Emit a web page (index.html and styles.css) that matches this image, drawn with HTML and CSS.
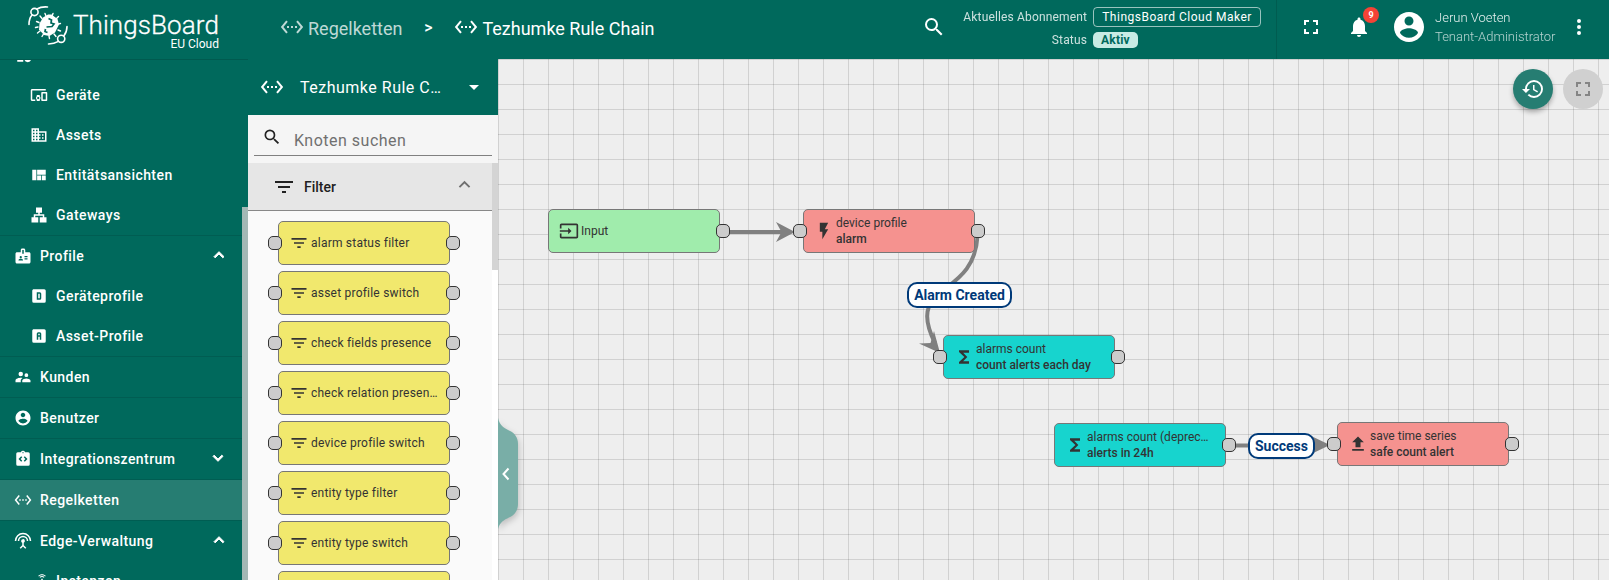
FILE: index.html
```html
<!DOCTYPE html>
<html lang="de">
<head>
<meta charset="utf-8">
<title>ThingsBoard – Tezhumke Rule Chain</title>
<link rel="stylesheet" href="styles.css">
</head>
<body>
<svg class="defs" width="0" height="0">
  <symbol id="rule" viewBox="0 0 24 24"><path d="M7.77 6.76 6.23 5.48.82 12l5.41 6.52 1.54-1.28L3.42 12l4.35-5.24zM7 13h2v-2H7v2zm10-2h-2v2h2v-2zm-6 2h2v-2h-2v2zm6.77-7.52-1.54 1.28L20.58 12l-4.35 5.24 1.54 1.28L23.18 12l-5.41-6.52z"/></symbol>
  <symbol id="search" viewBox="0 0 24 24"><path d="M15.5 14h-.79l-.28-.27A6.471 6.471 0 0 0 16 9.5 6.5 6.5 0 1 0 9.5 16c1.61 0 3.09-.59 4.23-1.57l.27.28v.79l5 4.99L20.49 19l-4.99-5zm-6 0C7.01 14 5 11.99 5 9.5S7.01 5 9.5 5 14 7.01 14 9.5 11.99 14 9.5 14z"/></symbol>
  <symbol id="full" viewBox="0 0 24 24"><path d="M7 14H5v5h5v-2H7v-3zm-2-4h2V7h3V5H5v5zm12 7h-3v2h5v-5h-2v3zM14 5v2h3v3h2V5h-5z"/></symbol>
  <symbol id="bell" viewBox="0 0 24 24"><path d="M12 22c1.1 0 2-.9 2-2h-4a2 2 0 0 0 2 2zm6-6v-5c0-3.07-1.64-5.64-4.5-6.32V4c0-.83-.67-1.5-1.5-1.5s-1.5.67-1.5 1.5v.68C7.63 5.36 6 7.92 6 11v5l-2 2v1h16v-1l-2-2z"/></symbol>
  <symbol id="account" viewBox="0 0 24 24"><path d="M12 2C6.48 2 2 6.48 2 12s4.48 10 10 10 10-4.48 10-10S17.52 2 12 2zm0 3c1.66 0 3 1.34 3 3s-1.34 3-3 3-3-1.34-3-3 1.34-3 3-3zm0 14.2a7.2 7.2 0 0 1-6-3.22c.03-1.99 4-3.08 6-3.08 1.99 0 5.97 1.09 6 3.08a7.2 7.2 0 0 1-6 3.22z"/></symbol>
  <symbol id="more" viewBox="0 0 24 24"><path d="M12 8a2 2 0 1 0 0-4 2 2 0 0 0 0 4zm0 2a2 2 0 1 0 0 4 2 2 0 0 0 0-4zm0 6a2 2 0 1 0 0 4 2 2 0 0 0 0-4z"/></symbol>
  <symbol id="history" viewBox="0 0 24 24"><path d="M13 3a9 9 0 0 0-9 9H1l3.89 3.89.07.14L9 12H6c0-3.87 3.13-7 7-7s7 3.13 7 7-3.13 7-7 7a6.95 6.95 0 0 1-4.94-2.06l-1.42 1.42A8.95 8.95 0 0 0 13 21a9 9 0 0 0 0-18zm-1 5v5l4.28 2.54.72-1.21-3.5-2.08V8H12z"/></symbol>
  <symbol id="up" viewBox="0 0 24 24"><path d="M7.41 15.41 12 10.83l4.59 4.58L18 14l-6-6-6 6z"/></symbol>
  <symbol id="devices" viewBox="0 0 24 24"><path d="M3 6h18V4H3c-1.1 0-2 .9-2 2v12c0 1.1.9 2 2 2h4v-2H3V6zm10 6H9v1.78c-.61.55-1 1.33-1 2.22s.39 1.67 1 2.22V20h4v-1.78c.61-.55 1-1.34 1-2.22s-.39-1.67-1-2.22V12zm-2 5.5c-.83 0-1.5-.67-1.5-1.5s.67-1.5 1.5-1.5 1.5.67 1.5 1.5-.67 1.5-1.5 1.5zM22 8h-6c-.5 0-1 .5-1 1v10c0 .5.5 1 1 1h6c.5 0 1-.5 1-1V9c0-.5-.5-1-1-1zm-1 10h-4v-8h4v8z"/></symbol>
  <symbol id="domain" viewBox="0 0 24 24"><path d="M12 7V3H2v18h20V7H12zM6 19H4v-2h2v2zm0-4H4v-2h2v2zm0-4H4V9h2v2zm0-4H4V5h2v2zm4 12H8v-2h2v2zm0-4H8v-2h2v2zm0-4H8V9h2v2zm0-4H8V5h2v2zm10 12h-8v-2h2v-2h-2v-2h2v-2h-2V9h8v10zm-2-8h-2v2h2v-2zm0 4h-2v2h2v-2z"/></symbol>
  <symbol id="quilt" viewBox="0 0 24 24"><path d="M3 5v14h5.500V5H3zm6.500 7.500V19h5.200v-6.500zM15.700 12.500V19H21v-6.500zM9.500 5v6.500H21V5z"/></symbol>
  <symbol id="lan" viewBox="0 0 24 24"><path d="M8 2h8v7h-3v2h6v4h3v7h-9v-7h4v-2H7v2h4v7H2v-7h3v-4h6V9H8z"/></symbol>
  <symbol id="badge" viewBox="0 0 24 24"><path fill-rule="evenodd" d="M20 7h-5V4c0-1.100-.9-2-2-2h-2c-1.100 0-2 .9-2 2v3H4c-1.100 0-2 .9-2 2v11c0 1.100.9 2 2 2h16c1.100 0 2-.9 2-2V9c0-1.100-.9-2-2-2zM9 12a1.500 1.500 0 1 1 0 3 1.500 1.500 0 0 1 0-3zm3 6H6v-.75c0-1 2-1.500 3-1.500s3 .5 3 1.500V18zm1-9h-2V4h2v5zm5 7.500h-4V15h4v1.500zm0-3h-4V12h4v1.500z"/></symbol>
  <symbol id="alpha-d" viewBox="0 0 24 24"><path fill-rule="evenodd" d="M5 3h14a2 2 0 0 1 2 2v14a2 2 0 0 1-2 2H5a2 2 0 0 1-2-2V5c0-1.100.9-2 2-2zm4 4v10h4a2 2 0 0 0 2-2V9a2 2 0 0 0-2-2H9zm2 2h2v6h-2V9z"/></symbol>
  <symbol id="alpha-a" viewBox="0 0 24 24"><path fill-rule="evenodd" d="M5 3h14a2 2 0 0 1 2 2v14a2 2 0 0 1-2 2H5a2 2 0 0 1-2-2V5c0-1.100.9-2 2-2zm6 4a2 2 0 0 0-2 2v8h2v-4h2v4h2V9a2 2 0 0 0-2-2h-2zm0 2h2v2h-2V9z"/></symbol>
  <symbol id="entities" viewBox="0 0 24 24"><path d="M3 3h8v8H3zM13 3h8v8h-8zM3 13h8v8H3zM17 12.500a4.500 4.500 0 1 0 0 9 4.500 4.500 0 0 0 0-9z"/></symbol>
  <symbol id="people" viewBox="0 0 24 24"><path d="M16.500 12a2.500 2.500 0 1 0 0-5 2.500 2.500 0 0 0 0 5zM9 11a3 3 0 1 0 0-6 3 3 0 0 0 0 6zm7.500 3c-1.830 0-5.500.92-5.500 2.750V19h11v-2.250c0-1.830-3.670-2.750-5.500-2.750zM9 13c-2.330 0-7 1.170-7 3.500V19h7v-2.250c0-.85.33-2.340 2.370-3.470C10.500 13.100 9.660 13 9 13z"/></symbol>
  <symbol id="integration" viewBox="0 0 24 24"><path fill-rule="evenodd" d="M19 3h-4.200a3 3 0 0 0-5.600 0H5a2 2 0 0 0-2 2v14a2 2 0 0 0 2 2h14a2 2 0 0 0 2-2V5a2 2 0 0 0-2-2zm-8 11.200L9.600 15.600 6 12l3.600-3.600L11 9.800 8.800 12l2.200 2.200zM12 4.300a.8.8 0 1 1 0-1.600.8.8 0 0 1 0 1.600zm2.400 11.300L13 14.200l2.200-2.200L13 9.800l1.400-1.400L18 12l-3.600 3.600z"/></symbol>
  <symbol id="antenna" viewBox="0 0 24 24"><path d="M12 5a7 7 0 0 0-7 7h2a5 5 0 0 1 10 0h2a7 7 0 0 0-7-7zm1 9.290A2.500 2.500 0 1 0 9.500 12c0 1.020.62 1.900 1.500 2.290v3.300L7.590 21 9 22.410l3-3 3 3L16.410 21 13 17.590v-3.300zM12 1A11 11 0 0 0 1 12h2a9 9 0 0 1 18 0h2A11 11 0 0 0 12 1z"/></symbol>
  <symbol id="router" viewBox="0 0 24 24"><path d="m20.200 5.900.8-.8C19.600 3.700 17.800 3 16 3s-3.600.7-5 2.100l.8.8C13 4.800 14.500 4.200 16 4.200s3 .6 4.200 1.700zm-.9.800c-.9-.9-2.100-1.400-3.300-1.400s-2.400.5-3.300 1.400l.8.8c.7-.7 1.600-1 2.500-1s1.800.3 2.500 1zM19 13h-2V9h-2v4H5a2 2 0 0 0-2 2v4a2 2 0 0 0 2 2h14a2 2 0 0 0 2-2v-4a2 2 0 0 0-2-2z"/></symbol>
  <symbol id="filter" viewBox="0 0 24 24"><path d="M10 18h4v-2h-4v2zM3 6v2h18V6H3zm3 7h12v-2H6v2z"/></symbol>
  <symbol id="input" viewBox="0 0 24 24"><path d="M21 3.010H3c-1.100 0-2 .9-2 2V9h2V4.990h18v14.030H3V15H1v4.010c0 1.100.9 1.980 2 1.980h18c1.100 0 2-.88 2-1.980v-14a2 2 0 0 0-2-2zM11 16l4-4-4-4v3H1v2h10v3z"/></symbol>
  <symbol id="flash" viewBox="0 0 24 24"><path d="M7 2v11h3v9l7-12h-4l4-8z"/></symbol>
  <symbol id="sum" viewBox="0 0 24 24"><path d="M18 4H6v2l6.500 6L6 18v2h12v-3h-7l5-5-5-5h7z"/></symbol>
  <symbol id="upload" viewBox="0 0 24 24"><path d="M9 16h6v-6h4l-7-7-7 7h4zm-4 2h14v2H5z"/></symbol>
</svg>

<header class="topbar">
  <div class="brand">
    <svg class="brand-mark" viewBox="0 0 44 44">
      <g fill="none" stroke="#fff" stroke-width="1.600" stroke-linecap="round">
        <circle cx="8.500" cy="9" r="3.600"/><circle cx="35.200" cy="35.800" r="3.600"/>
        <path d="M11 6Q15 3.500 21.500 4M6 12Q3 15.500 3 21.500M32.500 38.400Q28 41 22.500 41M37.800 33Q41 29 41 23.500"/>
        <path stroke-width="1.400" d="M20 13l-1-2.500M26 13l1-2.500M30 16l2.500-2.500M32 21l2.500-.5M32 27l2.500 1M28 31l2 2.500M23 33l.5 2.500M17.500 31l-1.500 2.500M14 28l-2.500 2M12 24l-2.500.5M13 19.500l-2.500-1M16 15.500l-2-2.500"/>
      </g>
      <path fill="#fff" d="M22 11.500h3.500l6 4.500 1.500 5.500-4 8-5.500 3.500-5.500-1-5-5.500.5-6 3.500-6z"/>
      <path fill="none" stroke="#00695c" stroke-width="1.700" d="M22.500 15.500l3 1.500-.5 3 3 1-2 2.500-5.500.5M21.500 29.500l-2.500-1 .5-2.500"/>
    </svg>
    <div class="brand-text"><span class="brand-name">ThingsBoard</span><span class="brand-sub">EU Cloud</span></div>
  </div>
  <nav class="crumbs">
    <span class="crumb parent"><svg class="i24"><use href="#rule"/></svg><span class="crumb-label">Regelketten</span></span>
    <span class="crumb-sep">&gt;</span>
    <span class="crumb"><svg class="i24"><use href="#rule"/></svg><span class="crumb-label">Tezhumke Rule Chain</span></span>
  </nav>
  <svg class="i24 top-search"><use href="#search"/></svg>
  <div class="plan">
    <span class="plan-key">Aktuelles Abonnement</span><span class="plan-chip">ThingsBoard Cloud Maker</span>
    <span class="plan-key">Status</span><span class="status-chip">Aktiv</span>
  </div>
  <div class="user-area">
    <svg class="i24 top-full"><use href="#full"/></svg>
    <div class="notif"><svg class="i24"><use href="#bell"/></svg><span class="notif-count">9</span></div>
    <svg class="avatar"><use href="#account"/></svg>
    <div class="user"><span class="user-name">Jerun Voeten</span><span class="user-role">Tenant-Administrator</span></div>
    <svg class="i24 top-more"><use href="#more"/></svg>
  </div>
</header>

<div class="body">
  <aside class="sidebar">
    <ul class="menu">
      <li class="item group"><svg><use href="#entities"/></svg><span>Entitäten</span></li>
      <li class="item sub"><svg><use href="#devices"/></svg><span>Geräte</span></li>
      <li class="item sub"><svg><use href="#domain"/></svg><span>Assets</span></li>
      <li class="item sub"><svg><use href="#quilt"/></svg><span>Entitätsansichten</span></li>
      <li class="item sub"><svg><use href="#lan"/></svg><span>Gateways</span></li>
      <li class="item top"><svg><use href="#badge"/></svg><span>Profile</span><svg class="chev"><use href="#up"/></svg></li>
      <li class="item sub"><svg><use href="#alpha-d"/></svg><span>Geräteprofile</span></li>
      <li class="item sub"><svg><use href="#alpha-a"/></svg><span>Asset-Profile</span></li>
      <li class="item top"><svg><use href="#people"/></svg><span>Kunden</span></li>
      <li class="item top"><svg><use href="#account"/></svg><span>Benutzer</span></li>
      <li class="item top"><svg><use href="#integration"/></svg><span>Integrationszentrum</span><svg class="chev down"><use href="#up"/></svg></li>
      <li class="item top active"><svg><use href="#rule"/></svg><span>Regelketten</span></li>
      <li class="item top"><svg><use href="#antenna"/></svg><span>Edge-Verwaltung</span><svg class="chev"><use href="#up"/></svg></li>
      <li class="item sub"><svg><use href="#router"/></svg><span>Instanzen</span></li>
    </ul>
    <div class="side-thumb"></div>
  </aside>

  <section class="library">
    <div class="chain-select"><svg class="i24"><use href="#rule"/></svg><span>Tezhumke Rule C…</span><i class="caret"></i></div>
    <div class="node-search"><svg><use href="#search"/></svg><span>Knoten suchen</span></div>
    <div class="library-scroll">
      <div class="library-list">
        <div class="group-head"><svg class="i24"><use href="#filter"/></svg><span>Filter</span><svg class="group-chev"><use href="#up"/></svg></div>
        <div class="group-body">
          <div class="node filter-node"><i class="port in"></i><svg><use href="#filter"/></svg><span>alarm status filter</span><i class="port out"></i></div>
          <div class="node filter-node"><i class="port in"></i><svg><use href="#filter"/></svg><span>asset profile switch</span><i class="port out"></i></div>
          <div class="node filter-node"><i class="port in"></i><svg><use href="#filter"/></svg><span>check fields presence</span><i class="port out"></i></div>
          <div class="node filter-node"><i class="port in"></i><svg><use href="#filter"/></svg><span>check relation presen…</span><i class="port out"></i></div>
          <div class="node filter-node"><i class="port in"></i><svg><use href="#filter"/></svg><span>device profile switch</span><i class="port out"></i></div>
          <div class="node filter-node"><i class="port in"></i><svg><use href="#filter"/></svg><span>entity type filter</span><i class="port out"></i></div>
          <div class="node filter-node"><i class="port in"></i><svg><use href="#filter"/></svg><span>entity type switch</span><i class="port out"></i></div>
          <div class="node filter-node"></div>
        </div>
      </div>
      <div class="library-track"><div class="library-thumb"></div></div>
    </div>
  </section>

  <main class="canvas">
    <svg class="edges" viewBox="498 59 1111 521">
      <g fill="none" stroke="#808080" stroke-width="4">
        <path d="M728 232H784"/>
        <path d="M977.500 236C974 300 904 281 935 343"/>
        <path d="M1234 445.500H1315"/>
      </g>
      <path fill="#808080" d="M776 222l19 10-19 10 5.500-10zM919 343.500l11.500-.5 3.500-12 6 22zM1308 434.500l22 10.500-22 10.500z"/>
    </svg>
    <svg class="drawer-toggle" viewBox="0 0 30 120"><path fill="#79aea7" d="M0 4C2 12 6 14 11 16.500 17 19 20 24 20 30V90C20 96 17 101 11 103.500 6 106 2 108 0 115z"/><path fill="none" stroke="#fff" stroke-width="2" d="M10.500 54.500l-5 5.500 5 5.500"/></svg>

    <div class="node flow n-input"><svg class="big"><use href="#input"/></svg><span>Input</span><i class="port out"></i></div>
    <div class="node flow n-profile"><i class="port in"></i><svg><use href="#flash"/></svg><span>device profile<b>alarm</b></span><i class="port out"></i></div>
    <div class="node flow n-count"><i class="port in"></i><svg><use href="#sum"/></svg><span>alarms count<b>count alerts each day</b></span><i class="port out"></i></div>
    <div class="node flow n-deprec"><svg><use href="#sum"/></svg><span>alarms count (deprec…<b>alerts in 24h</b></span><i class="port out"></i></div>
    <div class="node flow n-save"><i class="port in"></i><svg><use href="#upload"/></svg><span>save time series<b>safe count alert</b></span><i class="port out"></i></div>
    <div class="edge-label l-created">Alarm Created</div>
    <div class="edge-label l-success">Success</div>

    <div class="canvas-actions">
      <div class="fab primary"><svg class="i24"><use href="#history"/></svg></div>
      <div class="fab muted"><svg class="i24"><use href="#full"/></svg></div>
    </div>
  </main>
</div>
</body>
</html>
```
FILE: styles.css
```css
* { box-sizing: border-box; }
body { margin: 0; width: 1609px; height: 580px; overflow: hidden; font-family: Roboto, sans-serif; color: #333; display: flex; flex-direction: column; }
svg { fill: currentColor; flex: none; display: block; }
.defs { position: absolute; }
.i24 { width: 24px; height: 24px; }

.topbar { height: 59px; flex: none; background: #00695c; color: #fff; display: flex; }
.brand { width: 248px; display: flex; padding: 3px 0 0 26px; }
.brand-mark { width: 44px; height: 44px; }
.brand-text { display: flex; flex-direction: column; align-items: flex-end; margin-left: 3px; width: 146px; }
.brand-name { font-size: 26px; line-height: 30px; font-weight: 300; letter-spacing: .1px; margin-top: 7px; white-space: nowrap; -webkit-text-stroke: .3px #fff; }
.brand-sub { font-size: 12px; line-height: 14px; margin-top: -3px; }
.crumbs { width: 675px; padding-left: 32px; display: flex; height: 54px; align-items: center; }
.crumb { display: flex; align-items: center; gap: 4px; font-size: 18px; }
.crumb-label { padding-top: 3px; }
.parent { color: rgba(255,255,255,.75); }
.crumb-sep { width: 52px; text-align: center; font-size: 16px; font-weight: 500; }
.top-search { margin: 15px 0 0 -1px; }
.plan { width: 328px; margin-left: 3px; padding: 7px 0 0 14px; display: grid; grid-template-columns: 124px auto; column-gap: 6px; justify-content: start; grid-template-rows: 20px 16px; row-gap: 5px; align-items: center; justify-items: start; font-size: 12px; letter-spacing: .4px; border-right: 1px solid rgba(0,0,0,.12); }
.plan-key { justify-self: end; opacity: .8; white-space: nowrap; letter-spacing: .15px; }
.plan-chip { width: 168px; height: 20px; border: 1px solid rgba(255,255,255,.6); border-radius: 4px; line-height: 18px; text-align: center; white-space: nowrap; font-weight: 400; letter-spacing: .5px; }
.status-chip { width: 45px; height: 16px; border-radius: 5px; background: #c8ebe4; color: #00695c; font-weight: 700; line-height: 16px; text-align: center; letter-spacing: .2px; }
.user-area { flex: 1; display: flex; height: 54px; align-items: center; }
.top-full { margin-left: 22px; }
.notif { position: relative; margin-left: 24px; }
.notif-count { position: absolute; left: 16px; top: -8px; width: 16px; height: 16px; border-radius: 8px; background: #f44336; font-size: 9px; font-weight: 700; line-height: 16px; text-align: center; }
.avatar { width: 36px; height: 36px; margin-left: 20px; }
.user { margin-left: 8px; width: 120px; display: flex; flex-direction: column; font-size: 13px; line-height: 19px; font-weight: 300; white-space: nowrap; }
.user-name { opacity: .9; }
.user-role { opacity: .7; }
.top-more { margin-left: 12px; }

.body { flex: 1; min-height: 0; display: flex; }
.sidebar { width: 248px; flex: none; background: #00695c; color: #fff; border-top: 1px solid #005a4f; overflow: hidden; display: flex; }
.menu { list-style: none; margin: -25px 0 0; padding: 0; width: 242px; flex: none; }
.item { height: 40px; display: flex; align-items: center; padding: 0 17px 0 14px; font-size: 14px; font-weight: 500; letter-spacing: .44px; white-space: nowrap; }
.item svg { width: 18px; height: 18px; margin-right: 8px; }
.item.group svg { width: 20px; margin-right: 6px; }
.item.sub { padding-left: 30px; }
.item.top { height: 41px; border-top: 1px solid #005d52; }
.item.active { background: #267d72; }
.item .chev { width: 20px; height: 20px; margin: -2px -4px 0 auto; stroke: currentColor; stroke-width: 1.200px; }
.item .down { transform: rotate(180deg); margin-right: -3px; }
.side-thumb { width: 6px; margin-top: 147px; background: #a3b8b5; }

.library { width: 250px; flex: none; display: flex; flex-direction: column; background: #f5f5f5; }
.chain-select { height: 56px; flex: none; background: #00695c; color: #fff; display: flex; align-items: center; padding: 0 19px 0 12px; font-size: 16px; letter-spacing: .5px; }
.chain-select span { margin-left: 16px; }
.caret { margin-left: auto; border: 5px solid transparent; border-top-color: #fff; border-bottom: 0; }
.node-search { height: 41px; flex: none; margin: 0 6px 7px; border-bottom: 1px solid #808080; display: flex; padding: 12px 0 0 8px; color: #222; font-size: 16px; letter-spacing: .5px; }
.node-search svg { width: 20px; height: 20px; }
.node-search span { margin: 4px 0 0 12px; line-height: 19px; color: #707070; }
.library-scroll { flex: 1; min-height: 0; display: flex; overflow: hidden; }
.library-list { width: 244px; background: #fafafa; }
.library-track { width: 6px; background: #fff; }
.library-thumb { height: 107px; background: #d4d4d4; }
.group-head { height: 48px; background: #e6e6e6; border-bottom: 1px solid #888; display: flex; align-items: center; padding: 0 16px 0 24px; font-size: 14px; font-weight: 500; color: #212121; }
.group-head span { margin-left: 8px; }
.group-head .group-chev { width: 23px; height: 23px; margin: -4px 0 0 auto; color: #707070; }
.group-body { padding: 10px 0 0 30px; display: grid; gap: 6px; }

.node { position: relative; width: 172px; height: 44px; border: 1px solid #777; border-radius: 5px; display: flex; align-items: center; font-size: 12px; line-height: 16px; color: #333; white-space: nowrap; }
.node svg { width: 20px; height: 20px; margin: 0 2px 0 10px; }
.filter-node { background: #f1e86d; letter-spacing: .22px; }
.port { position: absolute; top: 14px; width: 14px; height: 14px; border: 1px solid #333; border-radius: 5px; background: #ccc; }
.in { left: -11px; }
.out { right: -11px; }

.canvas { position: relative; flex: 1; overflow: hidden; background-color: #eee; background-image: linear-gradient(90deg, rgba(0,0,0,.12) 1px, transparent 1px), linear-gradient(rgba(0,0,0,.12) 1px, transparent 1px); background-size: 25px 25px; }
.edges { position: absolute; left: 0; top: 0; width: 1111px; height: 521px; }
.drawer-toggle { position: absolute; left: 0; top: 355px; width: 30px; height: 120px; filter: drop-shadow(1px 3px 3px rgba(0,0,0,.2)); }
.flow { position: absolute; }
.flow b { display: block; font-weight: 500; }
.n-input { left: 50px; top: 150px; background: #a0ecac; }
.n-profile { left: 305px; top: 150px; background: #f5928f; }
.n-count { left: 445px; top: 276px; background: #17d4ce; }
.n-deprec { left: 556px; top: 364px; background: #17d4ce; }
.n-save { left: 839px; top: 363px; background: #f5928f; }
.edge-label { position: absolute; height: 26px; border: 2px solid #003a79; border-radius: 10px; background: #fff; color: #003a79; font-size: 14px; font-weight: 700; line-height: 22px; text-align: center; white-space: nowrap; }
.l-created { left: 409px; top: 223px; width: 105px; }
.l-success { left: 750px; top: 374px; width: 67px; }
.canvas-actions { position: absolute; right: 6px; top: 10px; display: flex; gap: 10px; }
.fab { width: 40px; height: 40px; border-radius: 50%; display: grid; place-items: center; }
.primary { background: #267d72; color: #fff; box-shadow: 0 3px 5px rgba(0,0,0,.3); }
.muted { background: #d0d0d0; color: #858585; }
```
